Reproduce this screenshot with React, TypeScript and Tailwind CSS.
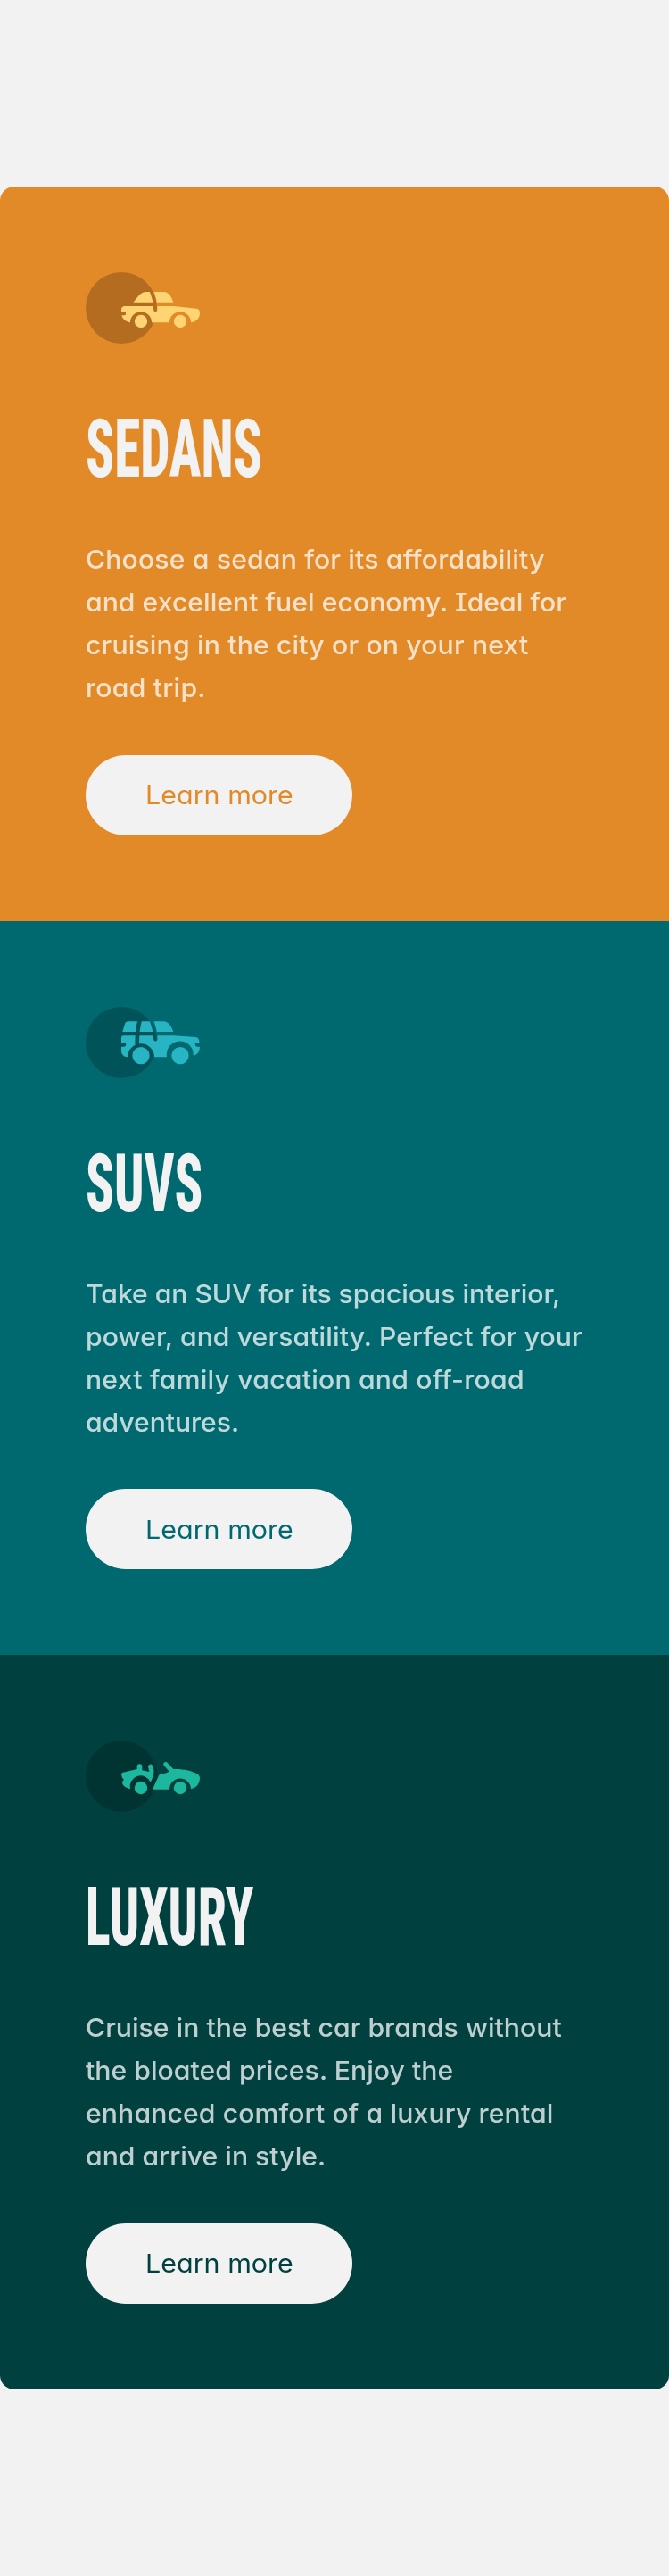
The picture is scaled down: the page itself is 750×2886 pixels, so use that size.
import type { ReactNode } from "react";

function SedanIcon() {
  return (
    <svg className="block h-20 w-[130px]" viewBox="48 45 390 240" aria-hidden="true">
      <circle cx="168" cy="165" r="120" fill="#000" fillOpacity=".2" />
      <mask id="sedan-door" maskUnits="userSpaceOnUse" x="48" y="45" width="390" height="240">
        <rect x="48" y="45" width="390" height="240" fill="#fff" />
        <path d="M268 104C278 128 283 149 283 171" fill="none" stroke="#000" strokeWidth="13" strokeLinecap="round" />
      </mask>
      <g fill="#ffd473" mask="url(#sedan-door)">
        <path d="M208 146C223 130 232 111 252 111H310C330 111 337 130 343 146Z" />
        <path d="M168 170Q169 159 180 159H345L421 167Q432 169 432 181C432 199 422 212 402 214A36 36 0 1 0 330 214H270A36 36 0 1 0 198 214C183 212 173 203 169 190H177A6.500 6.500 0 0 0 177 177H168Z" />
        <circle cx="234" cy="210" r="21.500" />
        <circle cx="366" cy="210" r="21.500" />
      </g>
    </svg>
  );
}

function SuvIcon() {
  return (
    <svg className="block h-20 w-[130px]" viewBox="48 38 390 240" aria-hidden="true">
      <circle cx="168" cy="158" r="120" fill="#000" fillOpacity=".2" />
      <mask id="suv-doors" maskUnits="userSpaceOnUse" x="48" y="38" width="390" height="240">
        <rect x="48" y="38" width="390" height="240" fill="#fff" />
        <path d="M268 80C278 104 283 125 283 147" fill="none" stroke="#000" strokeWidth="13" strokeLinecap="round" />
        <path d="M230 84Q221 113 221 165" fill="none" stroke="#000" strokeWidth="14" />
      </mask>
      <g fill="#27b5c3" mask="url(#suv-doors)">
        <path d="M172 122L180 95Q182 87 190 87H308C328 87 337 106 343 122Z" />
        <path d="M168 142Q168 135 175 135H345L419 140Q427 141 429 149L431 158H423A7 7 0 0 0 423 172H432C431 188 424 199 410 202A45 45 0 1 0 321 207H279A45 45 0 1 0 189 207Q168 204 168 187V172H177A7 7 0 0 0 177 158H168Z" />
        <circle cx="234" cy="202" r="29" />
        <circle cx="366" cy="202" r="29" />
      </g>
    </svg>
  );
}

function LuxuryIcon() {
  return (
    <svg className="block h-20 w-[130px]" viewBox="48 45 390 240" aria-hidden="true">
      <circle cx="168" cy="165" r="120" fill="#000" fillOpacity=".2" />
      <g fill="#1cb89d">
        <path d="M168 159Q168 153 174 152L221 141V132A8 8 0 0 1 238 132V145L262 150L258 133A8 8 0 0 1 273 129C279 143 281 159 266 185A36 36 0 0 0 198 208C184 204 173 198 171 187Q172 180 177 177Q168 169 168 159Z" />
        <path d="M273 209L292 167Q296 157 306 157Q318 156 329 149L310 127A7.500 7.500 0 0 1 321 118L343 141C376 140 405 146 426 159Q432 163 432 172C431 191 421 204 402 208A36 36 0 1 0 330 209Z" />
        <circle cx="234" cy="204" r="21.500" />
        <circle cx="366" cy="204" r="21.500" />
      </g>
    </svg>
  );
}

interface Line {
  text: string;
  tracking: string;
}

interface CategoryProps {
  icon: ReactNode;
  title: string;
  titleScale: string;
  lines: Line[];
  background: string;
  accent: string;
}

function Category({ icon, title, titleScale, lines, background, accent }: CategoryProps) {
  return (
    <section className={`flex h-[822.67px] flex-col items-start px-24 pt-24 ${background}`}>
      {icon}
      <h2
        className={`mt-[74px] h-[90px] origin-left font-['Roboto',sans-serif] text-[90px] leading-[90px] font-extrabold text-[#f2f2f2] uppercase [font-stretch:75%] ${titleScale}`}
      >
        {title}
      </h2>
      <p className="mt-[54px] origin-left scale-x-[1.04] font-medium text-white/75">
        {lines.map((line) => (
          <span key={line.text} className={`block h-12 whitespace-nowrap ${line.tracking}`}>
            {line.text}{" "}
          </span>
        ))}
      </p>
      <button
        type="button"
        className={`mt-[50.5px] flex h-[90px] w-[299px] items-center justify-center rounded-full bg-[#f2f2f2] ${accent}`}
      >
        <span className="inline-block scale-x-[1.05] pt-px">Learn more</span>
      </button>
    </section>
  );
}

export default function App() {
  return (
    <div className="h-[2886px] bg-[#f2f2f2] pt-[209px] font-['Inter',sans-serif] text-[29px] leading-[48px] [font-feature-settings:'cv11','cv08']">
      <main className="overflow-hidden rounded-2xl">
        <Category
          icon={<SedanIcon />}
          title="Sedans"
          titleScale="scale-x-[0.657]"
          background="bg-[#e28928]"
          accent="text-[#e28928]"
          lines={[
            { text: "Choose a sedan for its affordability", tracking: "tracking-[0.15px]" },
            { text: "and excellent fuel economy. Ideal for", tracking: "tracking-[0.03px]" },
            { text: "cruising in the city or on your next", tracking: "tracking-[0.15px]" },
            { text: "road trip.", tracking: "tracking-[0.23px]" },
          ]}
        />
        <Category
          icon={<SuvIcon />}
          title="SUVs"
          titleScale="scale-x-[0.65]"
          background="bg-[#006970]"
          accent="text-[#006970]"
          lines={[
            { text: "Take an SUV for its spacious interior,", tracking: "tracking-[-0.04px]" },
            { text: "power, and versatility. Perfect for your", tracking: "tracking-[0.09px]" },
            { text: "next family vacation and off-road", tracking: "tracking-[0.21px]" },
            { text: "adventures.", tracking: "tracking-[-0.06px]" },
          ]}
        />
        <Category
          icon={<LuxuryIcon />}
          title="Luxury"
          titleScale="scale-x-[0.642]"
          background="bg-[#004140]"
          accent="text-[#004140]"
          lines={[
            { text: "Cruise in the best car brands without", tracking: "tracking-[0.01px]" },
            { text: "the bloated prices. Enjoy the", tracking: "tracking-[0.03px]" },
            { text: "enhanced comfort of a luxury rental", tracking: "tracking-[0.12px]" },
            { text: "and arrive in style.", tracking: "tracking-normal" },
          ]}
        />
      </main>
    </div>
  );
}
